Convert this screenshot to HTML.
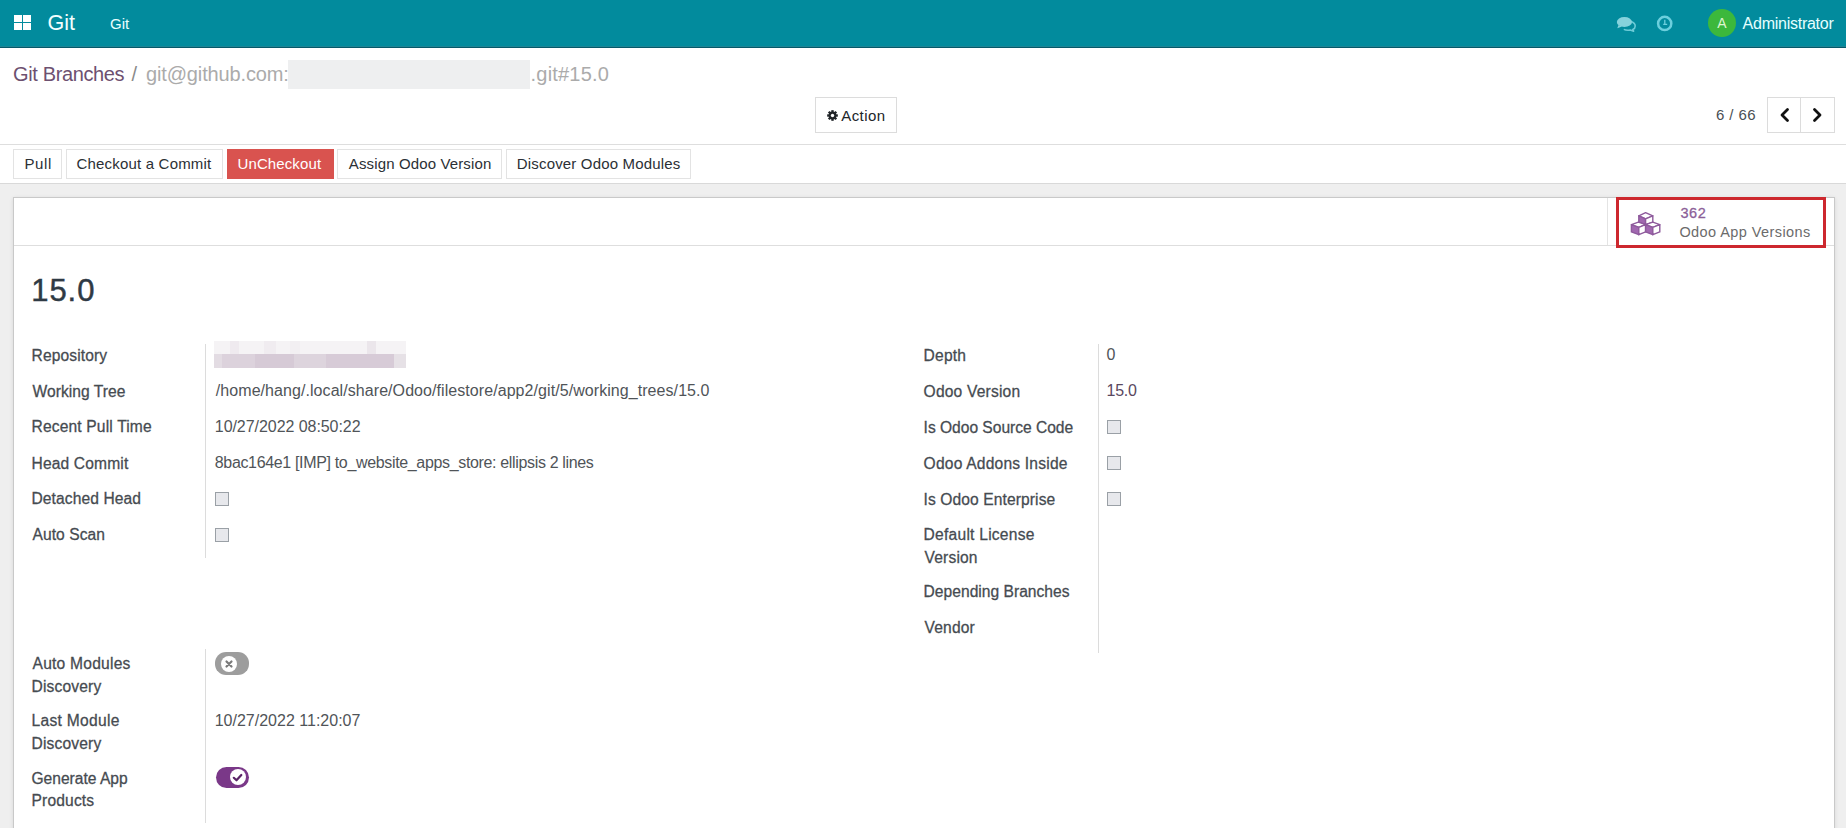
<!DOCTYPE html>
<html><head><meta charset="utf-8">
<style>
*{box-sizing:border-box;margin:0;padding:0}
html,body{width:1846px;height:828px;overflow:hidden;background:#fff;font-family:"Liberation Sans",sans-serif;color:#4a4f54}
.a{position:absolute}
.t{position:absolute;white-space:nowrap;line-height:1}
.btn{position:absolute;border:1px solid #e3e3e3;background:#fff}
.cb{position:absolute;width:14px;height:14px;border:1px solid #9aa0a6;background:#e7e8ec;border-radius:0}
.sep{position:absolute;width:1px;background:#dcdcdc}
</style></head><body>
<!-- NAVBAR -->
<div class="a" style="left:0;top:0;width:1846px;height:46px;background:#028b9d"></div>
<div class="a" style="left:0;top:46px;width:1846px;height:1px;background:#1d8494"></div><div class="a" style="left:0;top:47px;width:1846px;height:1px;background:#05596a"></div>
<div class="a" style="left:14px;top:15px;width:8px;height:7px;background:#fff"></div>
<div class="a" style="left:23px;top:15px;width:8px;height:7px;background:#fff"></div>
<div class="a" style="left:14px;top:23px;width:8px;height:7px;background:#fff"></div>
<div class="a" style="left:23px;top:23px;width:8px;height:7px;background:#fff"></div>
<!-- chat icon -->
<svg class="a" style="left:1610px;top:10px" width="70" height="28" viewBox="1610 10 70 28">
  <path d="M1630.5 21.2 C1633.5 22.2 1635.2 23.8 1635.2 25.9 C1635.2 27.6 1634.2 28.8 1632.8 29.5 L1633.6 31.2 L1630.3 30 C1628 30.5 1625.6 30.3 1623.8 29.4" fill="none" stroke="#6ccbd8" stroke-width="1.6" stroke-linejoin="round"/>
  <ellipse cx="1624.4" cy="22" rx="7.6" ry="5.1" fill="#86d2dc"/>
  <path d="M1618.5 25 L1617.3 28.2 L1622 26.5 Z" fill="#86d2dc"/>
  <circle cx="1664.7" cy="23.45" r="6.6" fill="none" stroke="#6ccfdd" stroke-width="2.5"/>
  <path d="M1664.8 19.8 V24.4 M1663.2 24.4 H1667.2" fill="none" stroke="#6ccfdd" stroke-width="1.3"/>
</svg>
<div class="a" style="left:1708px;top:9px;width:28px;height:28px;border-radius:50%;background:#3cb83c"></div>

<!-- CONTROL PANEL -->
<div class="a" style="left:288px;top:60px;width:242px;height:29px;background:#eeeff0"></div>
<div class="btn" style="left:815px;top:97px;width:82px;height:36px;border-color:#dcdcdc"></div>
<svg class="a" style="left:827px;top:110px" width="11" height="11" viewBox="0 0 13 13">
  <g fill="#212529" transform="translate(6.5 6.5)">
    <circle r="4.6"/>
    <rect x="-1.4" y="-6.3" width="2.8" height="12.6"/>
    <rect x="-1.4" y="-6.3" width="2.8" height="12.6" transform="rotate(45)"/>
    <rect x="-1.4" y="-6.3" width="2.8" height="12.6" transform="rotate(90)"/>
    <rect x="-1.4" y="-6.3" width="2.8" height="12.6" transform="rotate(135)"/>
  </g>
  <circle cx="6.5" cy="6.5" r="2" fill="#fff"/>
</svg>
<div class="btn" style="left:1767px;top:97px;width:68px;height:36px;border-color:#dcdcdc"></div>
<div class="a" style="left:1800px;top:97px;width:1px;height:36px;background:#dcdcdc"></div>
<svg class="a" style="left:1778px;top:107px" width="13" height="16" viewBox="0 0 13 16">
  <path d="M9.5 2.5 L4 8 L9.5 13.5" fill="none" stroke="#111" stroke-width="2.8" stroke-linecap="round" stroke-linejoin="round"/>
</svg>
<svg class="a" style="left:1811px;top:107px" width="13" height="16" viewBox="0 0 13 16">
  <path d="M3.5 2.5 L9 8 L3.5 13.5" fill="none" stroke="#111" stroke-width="2.8" stroke-linecap="round" stroke-linejoin="round"/>
</svg>
<div class="a" style="left:0;top:144px;width:1846px;height:1px;background:#dedede"></div>
<div class="btn" style="left:13px;top:149px;width:49px;height:30px"></div>
<div class="btn" style="left:66px;top:149px;width:157px;height:30px"></div>
<div class="a" style="left:227px;top:149px;width:107px;height:30px;background:#d9534f"></div>
<div class="btn" style="left:337px;top:149px;width:165px;height:30px"></div>
<div class="btn" style="left:506px;top:149px;width:185px;height:30px"></div>

<!-- BACKGROUND -->
<div class="a" style="left:0;top:183px;width:1846px;height:1px;background:#d9d9d9"></div>
<div class="a" style="left:0;top:184px;width:1846px;height:644px;background:#efefef"></div>
<!-- SHEET -->
<div class="a" style="left:13px;top:197px;width:1822px;height:640px;background:#fff;border:1px solid #c9c9c9;box-shadow:0 1px 4px rgba(0,0,0,.10)"></div>
<div class="a" style="left:14px;top:245px;width:1820px;height:1px;background:#dedede"></div>
<div class="a" style="left:1607px;top:198px;width:1px;height:47px;background:#e4e4e4"></div>
<div class="a" style="left:1616px;top:197px;width:210px;height:51px;border:3px solid #cd282e"></div>
<!-- cubes icon -->
<svg class="a" style="left:1630px;top:210.5px" width="32" height="27" viewBox="-1 -1 32 27">
  <g stroke="#8e5a9c" stroke-width="1.4" stroke-linejoin="round">
    <path d="M7.8 3.8 L14.6 0.6 L21.8 3.8 L14.6 6.8 Z" fill="#fff"/>
    <path d="M7.8 3.8 L14.6 6.8 L14.6 12.7 L7.8 10.2 Z" fill="#a168b0"/>
    <path d="M21.8 3.8 L14.6 6.8 L14.6 12.7 L21.8 10.2 Z" fill="#fff"/>
    <path d="M0.4 12.7 L7.4 10.2 L14.6 12.7 L7.8 15.3 Z" fill="#fff"/>
    <path d="M0.4 12.7 L7.8 15.3 L7.8 22.7 L0.4 19.9 Z" fill="#a168b0"/>
    <path d="M14.6 12.7 L7.8 15.3 L7.8 22.7 L14.6 19.9 Z" fill="#fff"/>
    <path d="M14.6 12.7 L21.8 10.2 L28.8 12.7 L21.8 15.3 Z" fill="#fff"/>
    <path d="M14.6 12.7 L21.8 15.3 L21.8 22.7 L14.6 19.9 Z" fill="#a168b0"/>
    <path d="M28.8 12.7 L21.8 15.3 L21.8 22.7 L28.8 19.9 Z" fill="#fff"/>
  </g>
</svg>

<!-- left group -->
<div class="sep" style="left:205px;top:344px;height:214px"></div>
<div class="a" style="left:214px;top:341px;width:192px;height:13px;background:#f5f3f5"></div><div class="a" style="left:230px;top:341px;width:9px;height:13px;background:#efeaef"></div><div class="a" style="left:264px;top:341px;width:12px;height:13px;background:#f0ecf0"></div><div class="a" style="left:367px;top:341px;width:9px;height:13px;background:#ebe6eb"></div><div class="a" style="left:290px;top:341px;width:10px;height:13px;background:#f2eff2"></div><div class="a" style="left:214px;top:354px;width:192px;height:14px;background:#dcd2dc"></div><div class="a" style="left:214px;top:354px;width:8px;height:14px;background:#e3dce3"></div><div class="a" style="left:255px;top:354px;width:39px;height:14px;background:#d6cad6"></div><div class="a" style="left:326px;top:354px;width:68px;height:14px;background:#d7cbd7"></div><div class="a" style="left:294px;top:354px;width:32px;height:14px;background:#ddd4dd"></div><div class="a" style="left:394px;top:354px;width:12px;height:14px;background:#e6e1e6"></div>
<div class="cb" style="left:215px;top:492px"></div>
<div class="cb" style="left:215px;top:528px"></div>
<!-- right group -->
<div class="sep" style="left:1098px;top:344px;height:309px"></div>
<div class="cb" style="left:1107px;top:420px"></div>
<div class="cb" style="left:1107px;top:456px"></div>
<div class="cb" style="left:1107px;top:492px"></div>
<!-- bottom group -->
<div class="sep" style="left:205px;top:649px;height:174px"></div>
<div class="a" style="left:215px;top:652.4px;width:34.4px;height:22.2px;border-radius:11.1px;background:#9d9d9d"></div>
<div class="a" style="left:221px;top:655.5px;width:16px;height:16px;border-radius:50%;background:#fff"></div>
<svg class="a" style="left:221px;top:655.5px" width="16" height="16" viewBox="0 0 16 16">
  <path d="M5.5 5.5 L10.5 10.5 M10.5 5.5 L5.5 10.5" stroke="#7a7a7a" stroke-width="2.2" stroke-linecap="round"/>
</svg>
<div class="a" style="left:215.5px;top:767px;width:33.5px;height:21px;border-radius:10.5px;background:#7a3888"></div>
<div class="a" style="left:229.8px;top:769px;width:16px;height:16px;border-radius:50%;background:#fff"></div>
<svg class="a" style="left:229.3px;top:768.5px" width="17" height="17" viewBox="0 0 17 17">
  <path d="M4.8 8.8 L7.5 11.3 L12.3 6" fill="none" stroke="#5a2466" stroke-width="2.2" stroke-linecap="round" stroke-linejoin="round"/>
</svg>

<div class="t" id="t0" style="left:47.50px;top:12.60px;font-size:21.5px;color:#f2ffff;">Git</div>
<div class="t" id="t1" style="left:110.00px;top:16.20px;font-size:15px;color:#eaffff;">Git</div>
<div class="t" id="t2" style="left:1742.60px;top:15.86px;font-size:16px;color:#e6ffff;letter-spacing:-0.258px;">Administrator</div>
<div class="t" id="t3" style="left:1717.30px;top:16.35px;font-size:14px;color:#dff5d0;">A</div>
<div class="t" id="t4" style="left:13.00px;top:63.87px;font-size:20px;color:#6d5070;letter-spacing:-0.364px;">Git Branches</div>
<div class="t" id="t5" style="left:131.60px;top:63.87px;font-size:20px;color:#8a8a8a;">/</div>
<div class="t" id="t6" style="left:146.00px;top:63.87px;font-size:20px;color:#ababab;letter-spacing:-0.143px;">git@github.com:</div>
<div class="t" id="t7" style="left:530.60px;top:63.87px;font-size:20px;color:#ababab;letter-spacing:0.188px;">.git#15.0</div>
<div class="t" id="t8" style="left:841.30px;top:107.90px;font-size:15px;color:#212529;letter-spacing:0.400px;">Action</div>
<div class="t" id="t9" style="left:1716.00px;top:107.00px;font-size:15px;color:#4a4f54;letter-spacing:0.400px;">6 / 66</div>
<div class="t" id="t10" style="left:24.40px;top:155.80px;font-size:15px;color:#2b3035;letter-spacing:0.667px;">Pull</div>
<div class="t" id="t11" style="left:76.50px;top:155.80px;font-size:15px;color:#2b3035;letter-spacing:0.188px;">Checkout a Commit</div>
<div class="t" id="t12" style="left:237.50px;top:155.80px;font-size:15px;color:#ffffff;letter-spacing:0.111px;">UnCheckout</div>
<div class="t" id="t13" style="left:348.80px;top:155.80px;font-size:15px;color:#2b3035;letter-spacing:0.133px;">Assign Odoo Version</div>
<div class="t" id="t14" style="left:516.80px;top:155.80px;font-size:15px;color:#2b3035;letter-spacing:0.170px;">Discover Odoo Modules</div>
<div class="t" id="t15" style="left:1680.40px;top:206.33px;font-size:14.5px;color:#8c5f98;-webkit-text-stroke:0.28px #8c5f98;letter-spacing:0.600px;">362</div>
<div class="t" id="t16" style="left:1679.40px;top:225.13px;font-size:14.5px;color:#6b6b6b;letter-spacing:0.425px;">Odoo App Versions</div>
<div class="t" id="t17" style="left:31.20px;top:275.16px;font-size:31px;color:#2f3a44;letter-spacing:0.967px;-webkit-text-stroke:0.45px #2f3a44;">15.0</div>
<div class="t" id="t18" style="left:31.50px;top:347.79px;font-size:15.6px;color:#464b51;-webkit-text-stroke:0.28px #464b51;letter-spacing:0.122px;">Repository</div>
<div class="t" id="t19" style="left:32.50px;top:383.69px;font-size:15.6px;color:#464b51;-webkit-text-stroke:0.28px #464b51;letter-spacing:0.045px;">Working Tree</div>
<div class="t" id="t20" style="left:31.50px;top:419.49px;font-size:15.6px;color:#464b51;-webkit-text-stroke:0.28px #464b51;letter-spacing:0.153px;">Recent Pull Time</div>
<div class="t" id="t21" style="left:31.50px;top:455.59px;font-size:15.6px;color:#464b51;-webkit-text-stroke:0.28px #464b51;letter-spacing:0.150px;">Head Commit</div>
<div class="t" id="t22" style="left:31.50px;top:491.49px;font-size:15.6px;color:#464b51;-webkit-text-stroke:0.28px #464b51;letter-spacing:0.092px;">Detached Head</div>
<div class="t" id="t23" style="left:32.50px;top:527.29px;font-size:15.6px;color:#464b51;-webkit-text-stroke:0.28px #464b51;letter-spacing:0.062px;">Auto Scan</div>
<div class="t" id="t24" style="left:215.80px;top:382.96px;font-size:16px;color:#505458;letter-spacing:0.067px;">/home/hang/.local/share/Odoo/filestore/app2/git/5/working_trees/15.0</div>
<div class="t" id="t25" style="left:214.80px;top:418.76px;font-size:16px;color:#505458;letter-spacing:-0.056px;">10/27/2022 08:50:22</div>
<div class="t" id="t26" style="left:214.80px;top:454.86px;font-size:16px;color:#505458;letter-spacing:-0.343px;">8bac164e1 [IMP] to_website_apps_store: ellipsis 2 lines</div>
<div class="t" id="t27" style="left:923.60px;top:347.69px;font-size:15.6px;color:#464b51;-webkit-text-stroke:0.28px #464b51;letter-spacing:0.200px;">Depth</div>
<div class="t" id="t28" style="left:923.60px;top:383.69px;font-size:15.6px;color:#464b51;-webkit-text-stroke:0.28px #464b51;letter-spacing:0.182px;">Odoo Version</div>
<div class="t" id="t29" style="left:923.60px;top:419.69px;font-size:15.6px;color:#464b51;-webkit-text-stroke:0.28px #464b51;letter-spacing:-0.022px;">Is Odoo Source Code</div>
<div class="t" id="t30" style="left:923.60px;top:455.69px;font-size:15.6px;color:#464b51;-webkit-text-stroke:0.28px #464b51;letter-spacing:0.200px;">Odoo Addons Inside</div>
<div class="t" id="t31" style="left:923.60px;top:491.69px;font-size:15.6px;color:#464b51;-webkit-text-stroke:0.28px #464b51;letter-spacing:0.094px;">Is Odoo Enterprise</div>
<div class="t" id="t32" style="left:923.60px;top:527.19px;font-size:15.6px;color:#464b51;-webkit-text-stroke:0.28px #464b51;letter-spacing:0.236px;">Default License</div>
<div class="t" id="t33" style="left:924.60px;top:550.19px;font-size:15.6px;color:#464b51;-webkit-text-stroke:0.28px #464b51;letter-spacing:0.156px;">Version</div>
<div class="t" id="t34" style="left:923.60px;top:584.19px;font-size:15.6px;color:#464b51;-webkit-text-stroke:0.28px #464b51;letter-spacing:0.018px;">Depending Branches</div>
<div class="t" id="t35" style="left:924.60px;top:619.99px;font-size:15.6px;color:#464b51;-webkit-text-stroke:0.28px #464b51;letter-spacing:0.156px;">Vendor</div>
<div class="t" id="t36" style="left:1106.60px;top:346.66px;font-size:16px;color:#505458;">0</div>
<div class="t" id="t37" style="left:1106.60px;top:383.46px;font-size:16px;color:#5a4860;letter-spacing:-0.300px;">15.0</div>
<div class="t" id="t38" style="left:32.50px;top:656.19px;font-size:15.6px;color:#464b51;-webkit-text-stroke:0.28px #464b51;letter-spacing:0.227px;">Auto Modules</div>
<div class="t" id="t39" style="left:31.50px;top:679.39px;font-size:15.6px;color:#464b51;-webkit-text-stroke:0.28px #464b51;letter-spacing:0.156px;">Discovery</div>
<div class="t" id="t40" style="left:31.50px;top:713.49px;font-size:15.6px;color:#464b51;-webkit-text-stroke:0.28px #464b51;letter-spacing:0.300px;">Last Module</div>
<div class="t" id="t41" style="left:31.50px;top:736.19px;font-size:15.6px;color:#464b51;-webkit-text-stroke:0.28px #464b51;letter-spacing:0.156px;">Discovery</div>
<div class="t" id="t42" style="left:31.50px;top:770.69px;font-size:15.6px;color:#464b51;-webkit-text-stroke:0.28px #464b51;letter-spacing:-0.009px;">Generate App</div>
<div class="t" id="t43" style="left:31.50px;top:793.39px;font-size:15.6px;color:#464b51;-webkit-text-stroke:0.28px #464b51;letter-spacing:0.156px;">Products</div>
<div class="t" id="t44" style="left:214.70px;top:712.76px;font-size:16px;color:#505458;letter-spacing:0.006px;">10/27/2022 11:20:07</div>
</body></html>
